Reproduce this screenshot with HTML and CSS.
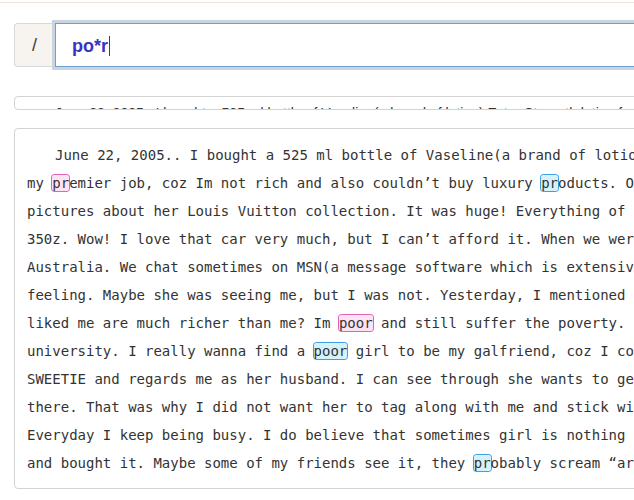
FILE: index.html
```html
<!DOCTYPE html>
<html lang="en">
<head>
<meta charset="utf-8">
<title>Search</title>
<link rel="stylesheet" href="styles.css">
</head>
<body>
<div class="topbar"></div>
<main class="page">
  <div class="search">
    <span class="prefix">/</span>
    <div class="field" role="textbox" aria-label="Pattern"><span class="query">po*r</span><span class="caret"></span></div>
  </div>
  <article class="card card--collapsed">
    <p class="preview">June 22, 2005.. I bought a 525 ml bottle of Vaseline(a brand of lotion) Extra Strength lotion for my dry skin, the winter here is cold and windy.</p>
  </article>
  <article class="card">
    <p class="text">June 22, 2005.. I bought a 525 ml bottle of Vaseline(a brand of lotion) Extra Strength lotion at the mall after<br>my <span class="hl hl--pink">pr</span>emier job, coz Im not rich and also couldn’t buy luxury <span class="hl hl--blue">pr</span>oducts. One day my friend showed me<br>pictures about her Louis Vuitton collection. It was huge! Everything of hers was branded, she even has a<br>350z. Wow! I love that car very much, but I can’t afford it. When we were young we studied together in<br>Australia. We chat sometimes on MSN(a message software which is extensively used) and she told me her<br>feeling. Maybe she was seeing me, but I was not. Yesterday, I mentioned it to her: why the guys who<br>liked me are much richer than me? Im <span class="hl hl--pink">poor</span> and still suffer the poverty. I work hard after the<br>university. I really wanna find a <span class="hl hl--blue">poor</span> girl to be my galfriend, coz I could understand her. She calls me<br>SWEETIE and regards me as her husband. I can see through she wants to get something from me when I am<br>there. That was why I did not want her to tag along with me and stick with me all the time, I was busy.<br>Everyday I keep being busy. I do believe that sometimes girl is nothing but trouble. I went to the shop<br>and bought it. Maybe some of my friends see it, they <span class="hl hl--blue">pr</span>obably scream “are you crazy?” at me.</p>
  </article>
</main>
</body>
</html>
```
FILE: styles.css
```css
html, body {
  margin: 0;
  padding: 0;
  overflow: hidden;
  background: #ffffff;
}

.topbar {
  height: 2px;
  border-bottom: 1px solid #efe5d8;
}

.page {
  width: 1100px;
  padding: 20px 0 0 14px;
}

.search {
  display: flex;
  height: 44px;
}

.prefix {
  box-sizing: border-box;
  width: 41px;
  display: flex;
  align-items: center;
  justify-content: center;
  padding-right: 1px;
  background: #f7f4ef;
  border: 1px solid #d8d8d8;
  border-right: none;
  border-radius: 4px 0 0 4px;
  font-family: "Liberation Sans", Arial, sans-serif;
  font-size: 18px;
  color: #3a3a3a;
}

.field {
  flex: 1;
  box-sizing: border-box;
  display: flex;
  align-items: center;
  padding: 2px 0 0 16px;
  border: 1px solid #6e9fd2;
  box-shadow: 0 0 0 3px #c9d4e0;
  background: #ffffff;
}

.query {
  font-family: "Liberation Sans", Arial, sans-serif;
  font-weight: bold;
  font-size: 18px;
  color: #3535c2;
}

.caret {
  display: inline-block;
  width: 1px;
  height: 20px;
  margin-left: 1px;
  margin-top: -1px;
  background: #3535c2;
}

.card {
  box-sizing: border-box;
  border: 1px solid #d3d3d3;
  border-radius: 4px;
  background: #ffffff;
}

.card--collapsed {
  margin-top: 29px;
  height: 14px;
  overflow: hidden;
}

.preview {
  margin: 0;
  padding: 2px 12px 0;
  font-family: "Liberation Sans", Arial, sans-serif;
  font-size: 14px;
  line-height: 28px;
  text-indent: 2em;
  white-space: nowrap;
  color: #333333;
}

.card:not(.card--collapsed) {
  margin-top: 18px;
  padding: 12px 12px 11px;
}

.text {
  margin: 0;
  font-family: "DejaVu Sans Mono", monospace;
  font-size: 14px;
  line-height: 28px;
  text-indent: 2em;
  white-space: nowrap;
  color: #333333;
}

.hl {
  border-radius: 3px;
}

.hl--pink {
  background: #fde2f4;
  box-shadow: 0 0 0 1px #e163b6;
}

.hl--blue {
  background: #d5f2fb;
  box-shadow: 0 0 0 1px #3f9fe4;
}
```
